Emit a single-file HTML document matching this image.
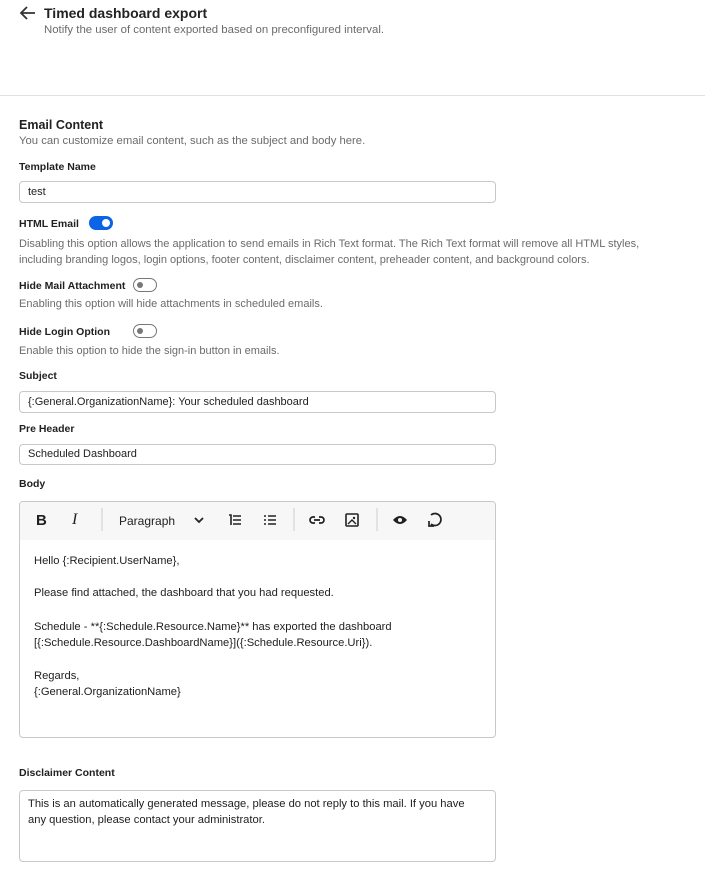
<!DOCTYPE html>
<html><head><style>
body{margin:0;width:705px;height:894px;background:#fff;font-family:"Liberation Sans",Arial,sans-serif;color:#212121;position:relative;overflow:hidden}
.a{position:absolute;white-space:nowrap}
.lbl{font-size:10.5px;font-weight:bold;color:#212121}
.d{font-size:11px;color:#6b6b6b}
.in{position:absolute;left:19px;width:477px;border:1px solid #c8c8c8;border-radius:4px;box-sizing:border-box;font-size:11px;padding-left:8px;color:#212121}
.tg{position:absolute;width:24px;height:14px;border:1px solid #777;border-radius:8px;box-sizing:border-box}
.tg::after{content:"";position:absolute;left:3px;top:3px;width:6px;height:6px;border-radius:50%;background:#777}
.on{background:#0b63e5;border-color:#0b63e5}
.on::after{left:12px;top:2px;width:8px;height:8px;background:#fff}
.ic{position:absolute;top:512px}
.sep{position:absolute;top:508px;width:2px;height:23px;background:#e2e2e2}
.ed{font-size:11.2px;color:#212121}
</style></head><body>
<svg class="a" style="left:19px;top:5px" width="18" height="16" viewBox="0 0 18 16"><path d="M16 8H3M8 2L2 8l6 6" fill="none" stroke="#333" stroke-width="1.8"/></svg>
<div class="a" style="left:44px;top:5px;font-size:14px;font-weight:bold;color:#222">Timed dashboard export</div>
<div class="a d" style="left:44px;top:24px;font-size:11.4px">Notify the user of content exported based on preconfigured interval.</div>
<div class="a" style="left:0;top:95px;width:705px;height:1px;background:#e0e0e0"></div>
<div class="a" style="left:19px;top:118px;font-size:12.5px;font-weight:bold">Email Content</div>
<div class="a d" style="left:19px;top:135px;font-size:11.3px">You can customize email content, such as the subject and body here.</div>
<div class="a lbl" style="left:19px;top:161px">Template Name</div>
<div class="in" style="top:181px;height:22px;line-height:20px">test</div>
<div class="a lbl" style="left:19px;top:218px">HTML Email</div>
<div class="tg on" style="left:89px;top:216px"></div>
<div class="a d" style="left:19px;top:236px;line-height:16px">Disabling this option allows the application to send emails in Rich Text format. The Rich Text format will remove all HTML styles,<br>including branding logos, login options, footer content, disclaimer content, preheader content, and background colors.</div>
<div class="a lbl" style="left:19px;top:280px">Hide Mail Attachment</div>
<div class="tg" style="left:133px;top:278px"></div>
<div class="a d" style="left:19px;top:298px">Enabling this option will hide attachments in scheduled emails.</div>
<div class="a lbl" style="left:19px;top:326px">Hide Login Option</div>
<div class="tg" style="left:133px;top:324px"></div>
<div class="a d" style="left:19px;top:345px">Enable this option to hide the sign-in button in emails.</div>
<div class="a lbl" style="left:19px;top:370px">Subject</div>
<div class="in" style="top:391px;height:22px;line-height:20px">{:General.OrganizationName}: Your scheduled dashboard</div>
<div class="a lbl" style="left:19px;top:423px">Pre Header</div>
<div class="in" style="top:444px;height:21px;line-height:19px">Scheduled Dashboard</div>
<div class="a lbl" style="left:19px;top:478px">Body</div>
<div class="a" style="left:19px;top:501px;width:477px;height:237px;border:1px solid #c8c8c8;border-radius:4px;box-sizing:border-box;overflow:hidden"><div style="height:38px;background:#f7f7f7"></div></div>
<div class="a" style="left:36px;top:512px;font-size:15px;font-weight:bold">B</div>
<div class="a" style="left:72px;top:511px;font-size:16px;font-style:italic;font-family:'Liberation Serif',serif">I</div>
<div class="sep" style="left:101px"></div>
<div class="a" style="left:119px;top:514px;font-size:12px">Paragraph</div>
<svg class="ic" style="left:193px;top:515px" width="12" height="10"><path d="M2 3l4 4 4-4" fill="none" stroke="#222" stroke-width="1.8"/></svg>
<svg class="ic" style="left:228px;top:514px" width="14" height="12"><path d="M1 1h2v10M5 2h8M5 6h8M5 10h8" fill="none" stroke="#222" stroke-width="1.6"/></svg>
<svg class="ic" style="left:263px;top:514px" width="14" height="12"><path d="M1 2h2M1 6h2M1 10h2M5 2h8M5 6h8M5 10h8" fill="none" stroke="#222" stroke-width="1.6"/></svg>
<div class="sep" style="left:293px"></div>
<svg class="ic" style="left:309px;top:514px" width="16" height="12"><path d="M6 3H4a3 3 0 000 6h2M10 3h2a3 3 0 010 6h-2M5 6h6" fill="none" stroke="#222" stroke-width="1.7"/></svg>
<svg class="ic" style="left:345px;top:513px" width="14" height="14"><rect x="1" y="1" width="12" height="12" rx="1" fill="none" stroke="#222" stroke-width="1.6"/><path d="M3 11l4-4 4 4" fill="none" stroke="#222" stroke-width="1.4"/><circle cx="9" cy="5" r="1.2" fill="#222"/></svg>
<div class="sep" style="left:376px"></div>
<svg class="ic" style="left:392px;top:514px" width="16" height="12"><path d="M1 6q7-8 14 0q-7 8-14 0z" fill="#222"/><circle cx="8" cy="6" r="2" fill="#f7f7f7"/></svg>
<svg class="ic" style="left:427px;top:511px" width="16" height="17"><path d="M4 13A6 6 0 1 0 4 4" fill="none" stroke="#222" stroke-width="1.7"/><path d="M2 10v5h5" fill="none" stroke="#222" stroke-width="1.7"/></svg>
<div class="a ed" style="left:34px;top:555px">Hello {:Recipient.UserName},</div>
<div class="a ed" style="left:34px;top:587px">Please find attached, the dashboard that you had requested.</div>
<div class="a ed" style="left:34px;top:619px;line-height:16px">Schedule - **{:Schedule.Resource.Name}** has exported the dashboard<br>[{:Schedule.Resource.DashboardName}]({:Schedule.Resource.Uri}).</div>
<div class="a ed" style="left:34px;top:668px;line-height:16px">Regards,<br>{:General.OrganizationName}</div>
<div class="a lbl" style="left:19px;top:767px">Disclaimer Content</div>
<div class="a" style="left:19px;top:790px;width:477px;height:72px;border:1px solid #c8c8c8;border-radius:4px;box-sizing:border-box;font-size:11.2px;line-height:16px;padding:5px 20px 5px 8px;white-space:normal">This is an automatically generated message, please do not reply to this mail. If you have any question, please contact your administrator.</div>
</body></html>
